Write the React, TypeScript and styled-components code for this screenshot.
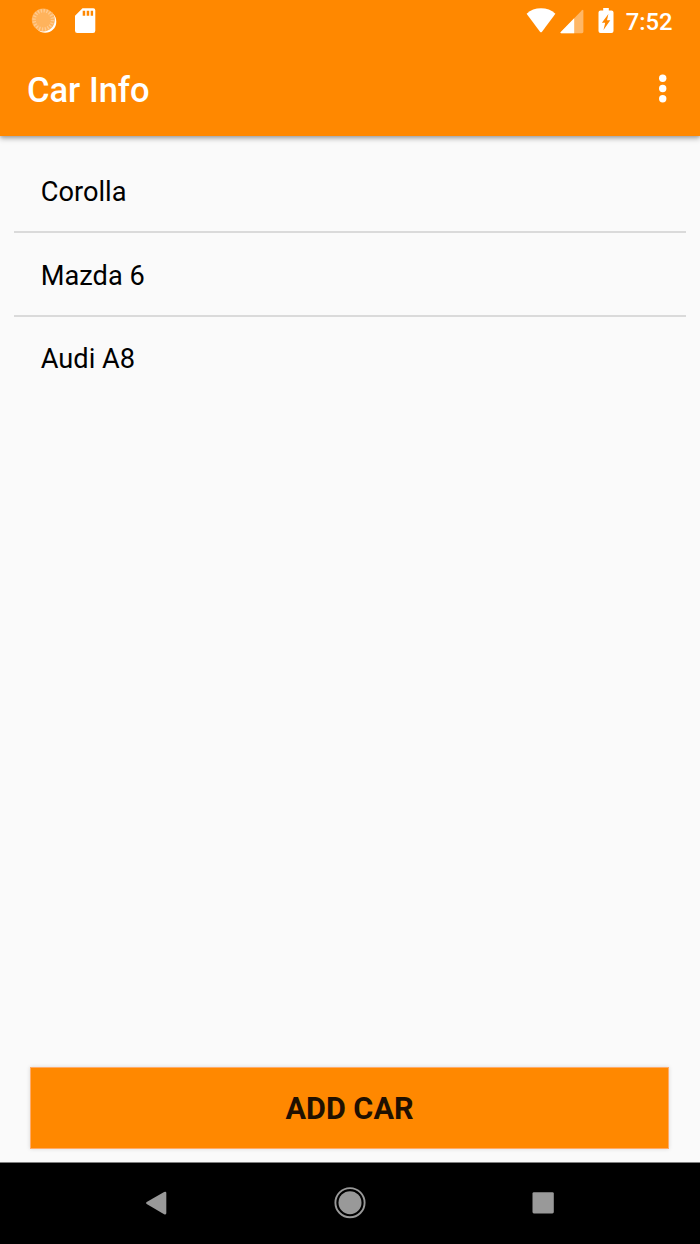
import React from "react";
import styled, { createGlobalStyle } from "styled-components";

const GlobalStyle = createGlobalStyle`
  * { box-sizing: border-box; }
  body { margin: 0; background: #fafafa; font-family: Roboto, sans-serif; }
`;

const Screen = styled.div`
  width: 700px;
  height: 1244px;
  display: flex;
  flex-direction: column;
  overflow: hidden;
  background: #fafafa;
`;

const Header = styled.header`
  flex: none;
  height: 136px;
  background: #ff8800;
  color: #fff;
  box-shadow: 0 3px 5px rgba(0, 0, 0, 0.26), 0 1px 3px rgba(0, 0, 0, 0.16);
`;

const StatusBar = styled.div`
  height: 41px;
  padding: 0 27.5px 0 31px;
  display: flex;
  align-items: center;
  justify-content: space-between;
`;

const StatusGroup = styled.div`
  display: flex;
  align-items: center;
`;

const StatusIcon = styled.svg<{ $gap?: number }>`
  display: block;
  flex: none;
  margin-right: ${(p) => p.$gap ?? 0}px;
`;

const Clock = styled.time`
  font-size: 23.8px;
  line-height: 28px;
  font-weight: 500;
  margin-top: 2px;
`;

const Toolbar = styled.div`
  height: 95px;
  padding: 0 27px;
  display: flex;
  align-items: center;
  justify-content: space-between;
`;

const Title = styled.h1`
  margin: 3px 0 0;
  font-size: 34.5px;
  line-height: 40px;
  font-weight: 500;
`;

const MenuButton = styled.button`
  display: block;
  padding: 0;
  border: 0;
  background: none;
  color: inherit;
`;

const List = styled.ul`
  flex: 1;
  margin: 0;
  padding: 13px 13.6px 0;
  list-style: none;
`;

const ListItem = styled.li`
  height: 84px;
  padding: 2px 27.2px 0;
  font-size: 27.2px;
  line-height: 82px;
  color: #000;
  border-bottom: 2px solid #dadada;

  &:last-child {
    padding-top: 1px;
    border-bottom: 0;
  }
`;

const Footer = styled.div`
  flex: none;
  padding: 0 31px 13px 30px;
`;

const AddButton = styled.button`
  display: block;
  width: 100%;
  height: 82px;
  padding: 2px 0 0;
  border: 1px solid #ffab68;
  background: #ff8800;
  color: #1f1000;
  font: 700 30.6px/36px Roboto, sans-serif;
  box-shadow: 0 0 4px rgba(0, 0, 0, 0.14);
`;

const NavBar = styled.nav`
  flex: none;
  height: 82px;
  padding: 0 1px 1px 0;
  border-top: 1px solid #7f7f7f;
  background: #000;
  display: flex;
  justify-content: center;
  align-items: center;
  gap: 153.5px;
`;

const NavIcon = styled.svg`
  display: block;
  flex: none;
`;

const cars = ["Corolla", "Mazda 6", "Audi A8"];

export default function App() {
  return (
    <Screen>
      <GlobalStyle />
      <Header>
        <StatusBar>
          <StatusGroup>
            <StatusIcon width="26" height="26" viewBox="0 0 26 26" $gap={18}>
              <circle cx="14.2" cy="13.7" r="11.1" fill="#fff" />
              <circle cx="12.3" cy="11.9" r="11.500" fill="#ffb35c" />
              <circle cx="12.3" cy="11.9" r="9.200" fill="none" stroke="#ffcb91" strokeWidth="3.400" strokeDasharray="1.300 1.590" />
            </StatusIcon>
            <StatusIcon width="21" height="26" viewBox="0 0 21 26">
              <path
                fill="#fff"
                fillRule="evenodd"
                d="M7.500 .3H18.300a2 2 0 0 1 2 2v20.400a2.300 2.300 0 0 1-2.300 2.300H2.300A2.300 2.300 0 0 1 0 22.700V7.800ZM7.700 2.800v5h2.500v-5Zm4 0v5h2.500v-5Zm4 0v5h2.400v-5Z"
              />
            </StatusIcon>
          </StatusGroup>
          <StatusGroup>
            <StatusIcon width="30" height="26" viewBox="0 0 30 26" $gap={4}>
              <path fill="#fff" d="M.6 5.800C4.500 1.900 9.500.3 15 .3s10.500 1.600 14.400 5.500L16 23.700q-1 1.200-2 0Z" />
            </StatusIcon>
            <StatusIcon width="24" height="26" viewBox="0 0 24 26" $gap={14}>
              <path fill="#ffb766" d="M23.400 2.900V23.800q0 1.400-1.400 1.400H1.300q-1.500 0-.5-1.200L22 2.200q1.400-1 1.400.7Z" />
              <path fill="#fff" d="M14.200 10.200v15H1.300q-1.500 0-.5-1.200Z" />
            </StatusIcon>
            <StatusIcon width="16" height="26" viewBox="0 0 16 26" $gap={11.5}>
              <path
                fill="#fff"
                fillRule="evenodd"
                d="M5.200 0h5.600v2.600h2.700q2 0 2 2v18.400q0 2-2 2h-11q-2 0-2-2V4.600q0-2 2-2h2.700ZM10.400 6 3.900 14.800H7.200L5.500 22 12.300 12.300H9Z"
              />
            </StatusIcon>
            <Clock>7:52</Clock>
          </StatusGroup>
        </StatusBar>
        <Toolbar>
          <Title>Car Info</Title>
          <MenuButton aria-label="More options">
            <NavIcon width="20" height="30" viewBox="0 0 20 30" fill="#fff">
              <circle cx="9.700" cy="4.300" r="3.700" />
              <circle cx="9.700" cy="14.500" r="3.700" />
              <circle cx="9.700" cy="24.700" r="3.700" />
            </NavIcon>
          </MenuButton>
        </Toolbar>
      </Header>
      <List>
        {cars.map((car) => (
          <ListItem key={car}>{car}</ListItem>
        ))}
      </List>
      <Footer>
        <AddButton>ADD CAR</AddButton>
      </Footer>
      <NavBar>
        <NavIcon width="40" height="40" viewBox="0 0 40 40">
          <path fill="#999" d="M10.700 19.100 28.100 9q2.200-1 2.200 1.100v20q0 2.100-2.200 1.100L10.700 21q-1.500-.95 0-1.900Z" />
        </NavIcon>
        <NavIcon width="40" height="40" viewBox="0 0 40 40">
          <circle cx="20" cy="19.700" r="14.600" fill="none" stroke="#999" strokeWidth="1.900" />
          <circle cx="20" cy="19.700" r="11.500" fill="#999" />
        </NavIcon>
        <NavIcon width="40" height="40" viewBox="0 0 40 40">
          <rect x="9.500" y="9.200" width="21.300" height="21.300" rx="1.400" fill="#999" />
        </NavIcon>
      </NavBar>
    </Screen>
  );
}
